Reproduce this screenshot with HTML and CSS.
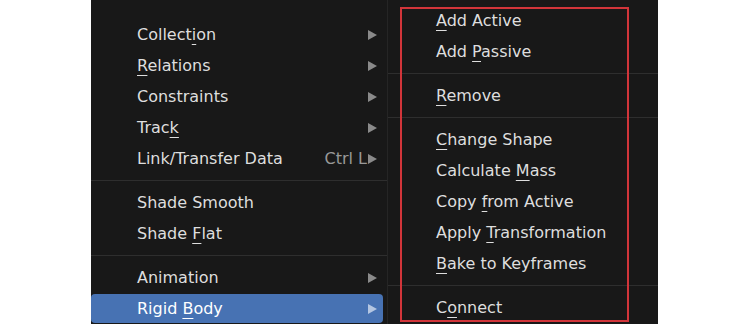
FILE: index.html
```html
<!DOCTYPE html>
<html lang="en">
<head>
    <meta charset="UTF-8">
    <title>Object Menu - Rigid Body</title>
    <link rel="stylesheet" href="styles.css">
</head>
<body>
    <div class="stage">
        <div class="menu main-menu">
            <div class="item"><span class="label">Collect<u>i</u>on</span><span class="arrow"></span></div>
            <div class="item"><span class="label"><u>R</u>elations</span><span class="arrow"></span></div>
            <div class="item"><span class="label">Constraints</span><span class="arrow"></span></div>
            <div class="item"><span class="label">Trac<u>k</u></span><span class="arrow"></span></div>
            <div class="item"><span class="label">Link/Transfer Data</span><span class="right"><span class="shortcut">Ctrl L</span><span class="arrow"></span></span></div>
            <div class="separator"></div>
            <div class="item"><span class="label">Shade Smooth</span></div>
            <div class="item"><span class="label">Shade <u>F</u>lat</span></div>
            <div class="separator"></div>
            <div class="item"><span class="label">Animation</span><span class="arrow"></span></div>
            <div class="item active"><span class="label">Rigid <u>B</u>ody</span><span class="arrow"></span></div>
        </div>
        <div class="menu sub-menu">
            <div class="item"><span class="label"><u>A</u>dd Active</span></div>
            <div class="item"><span class="label">Add <u>P</u>assive</span></div>
            <div class="separator"></div>
            <div class="item"><span class="label"><u>R</u>emove</span></div>
            <div class="separator"></div>
            <div class="item"><span class="label"><u>C</u>hange Shape</span></div>
            <div class="item"><span class="label">Calculate <u>M</u>ass</span></div>
            <div class="item"><span class="label">Copy <u>f</u>rom Active</span></div>
            <div class="item"><span class="label">Apply <u>T</u>ransformation</span></div>
            <div class="item"><span class="label"><u>B</u>ake to Keyframes</span></div>
            <div class="separator"></div>
            <div class="item"><span class="label">C<u>o</u>nnect</span></div>
        </div>
        <div class="highlight-box"></div>
    </div>
</body>
</html>
```

FILE: styles.css
```css
* {
    margin: 0;
    padding: 0;
    box-sizing: border-box;
}

body {
    background: #fff;
    width: 750px;
    height: 324px;
    overflow: hidden;
    font-family: 'DejaVu Sans', sans-serif;
    font-size: 16px;
}

.stage {
    position: relative;
    display: flex;
    height: 324px;
    padding-left: 91px;
}

.menu {
    background: #181818;
    height: 324px;
}

.main-menu {
    width: 296px;
    padding-top: 19px;
}

.sub-menu {
    width: 271px;
    padding-top: 5px;
    border-left: 1px solid #252525;
}

.item {
    display: flex;
    align-items: center;
    justify-content: space-between;
    height: 31px;
    line-height: 31px;
    color: #dedede;
    white-space: nowrap;
}

.main-menu .item {
    padding-left: 46px;
    margin-right: 4px;
}

.sub-menu .item {
    padding-left: 48px;
}

.item u {
    text-decoration: underline;
    text-decoration-thickness: 1px;
    text-underline-offset: 4px;
}

.item.active {
    background: #4772b3;
    color: #fff;
    border-radius: 4px;
    height: 29px;
    margin-top: 1px;
}

.right {
    display: flex;
    align-items: center;
}

.shortcut {
    color: #989898;
    margin-right: 1px;
}

.arrow {
    width: 0;
    height: 0;
    border-left: 9px solid #8a8a8a;
    border-top: 5px solid transparent;
    border-bottom: 5px solid transparent;
    margin-right: 6px;
}

.item.active .arrow {
    border-left-color: #b4c6e2;
}

.separator {
    height: 13px;
    padding-top: 6px;
}

.separator::before {
    content: '';
    display: block;
    height: 1px;
    background: #2e2e2e;
}

.highlight-box {
    position: absolute;
    left: 400px;
    top: 7px;
    width: 229px;
    height: 315px;
    border: 2px solid #d2353a;
}
```
